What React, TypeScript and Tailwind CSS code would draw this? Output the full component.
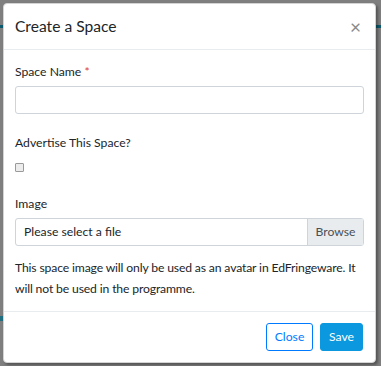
import React from 'react';

export default function App() {
  return (
    <div
      className="relative w-[381px] h-[366px] overflow-hidden bg-[#7f7f7f] p-[3px] pr-[5px]"
      style={{ fontFamily: 'Lato, "Noto Sans", sans-serif' }}
    >
      {/* bits of the page behind the overlay */}
      <div className="absolute left-0 top-[25px] w-[3px] h-[3px] bg-[#0c5a6e]" />
      <div className="absolute right-0 top-[25px] w-[5px] h-[3px] bg-[#0c5a6e]" />
      <div className="absolute left-0 top-[316px] w-[3px] h-[5px] bg-[#1f6f80]" />

      <div className="relative flex h-[360px] w-[373px] flex-col rounded-[4px] border border-[#d4d4d4] bg-white text-[#212529] shadow-[2px_2px_3px_rgba(0,0,0,0.35)]">
        {/* header */}
        <div className="flex h-[46px] items-center justify-between border-b border-[#e9ecef] px-[11px]">
          <h5 className="text-[15.6px] leading-none text-[#212529]">Create a Space</h5>
          <span className="mr-[3px] text-[19px] leading-none text-[#8a8a8a]">×</span>
        </div>

        {/* body */}
        <div className="flex flex-col px-[11px] pt-[12px] text-[12.2px]">
          <label className="leading-[19px]">
            Space Name <span className="text-[#dc3545]">*</span>
          </label>
          <div className="mt-[5px] h-[28px] rounded-[3px] border border-[#ced4da]" />

          <label className="mt-[19px] leading-[19px]">Advertise This Space?</label>
          <div className="mt-[11px] h-[9px] w-[9px] rounded-[1px] border border-[#9a9a9a] bg-[#ececec]" />

          <label className="mt-[22px] leading-[19px]">Image</label>
          <div className="mt-[5px] flex h-[28px] rounded-[3px] border border-[#ced4da]">
            <div className="flex flex-1 items-center pl-[8px]">Please select a file</div>
            <div className="flex w-[56px] items-center justify-center border-l border-[#ced4da] bg-[#e9ecef] text-[#495057]">
              Browse
            </div>
          </div>

          <p className="mt-[11px] leading-[21px] tracking-[-0.15px]">
            This space image will only be used as an avatar in EdFringeware. It will not be used in the
            programme.
          </p>
        </div>

        {/* footer */}
        <div className="mt-auto flex justify-end gap-[7px] border-t border-[#e9ecef] px-[12px] py-[11px] text-[12.2px]">
          <button className="h-[28px] w-[47px] rounded-[3px] border border-[#007bff] bg-white text-[#007bff]">
            Close
          </button>
          <button className="h-[28px] w-[43px] rounded-[3px] border border-[#0b98de] bg-[#0b98de] text-white">
            Save
          </button>
        </div>
      </div>
    </div>
  );
}
